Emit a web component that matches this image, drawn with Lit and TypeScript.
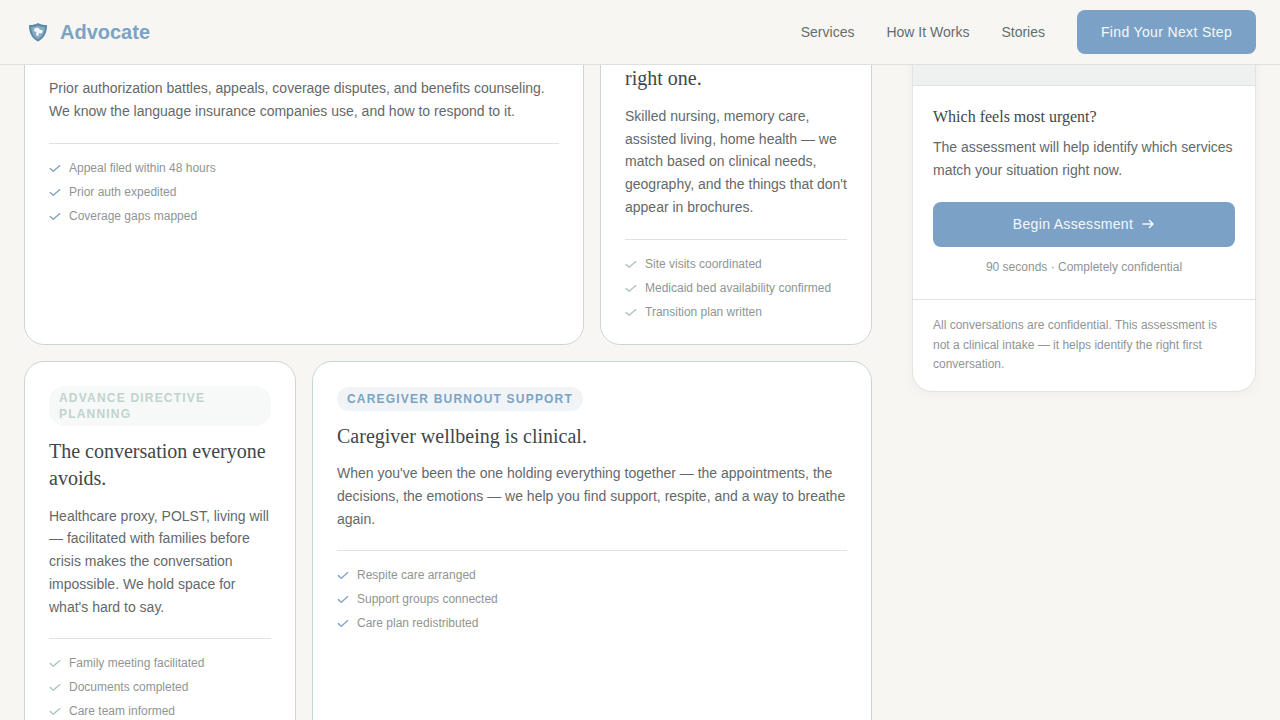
import { LitElement, html, css } from "lit";
import { customElement } from "lit/decorators.js";

const check = (cls: string) => html`<svg class="chk ${cls}" viewBox="0 0 12 12" width="12" height="12" fill="none" stroke-width="1.3" stroke-linecap="round" stroke-linejoin="round"><path d="M1.2 6.4 4.3 9.2 10.8 3.6"></path></svg>`;

@customElement("app-root")
export class AppRoot extends LitElement {
  static styles = css`
    :host { display: block; width: 1280px; height: 720px; overflow: hidden; position: relative; background: #f7f6f3; font-family: "Liberation Sans", Arial, sans-serif; color: #63696b; }
    * { box-sizing: border-box; }
    .nav { position: absolute; top: 0; left: 0; right: 0; height: 65px; z-index: 5; background: #f7f6f3; border-bottom: 1px solid #dfe1df; display: flex; align-items: center; justify-content: space-between; padding: 0 24px; }
    .brand { display: flex; align-items: center; gap: 12px; padding-left: 4px; font-size: 20px; font-weight: 700; color: #7ba3c4; }
    .links { display: flex; align-items: center; gap: 32px; font-size: 14px; color: #646e6d; }
    .cta { background: #7ba2c6; color: #f4f8fb; letter-spacing: .35px; height: 44px; width: 179px; border-radius: 8px; display: flex; align-items: center; justify-content: center; }
    .page { display: grid; grid-template-columns: 848px 344px; gap: 40px; padding: 20px 24px 0; align-items: start; }
    .grid { display: grid; grid-template-columns: repeat(3, 272px); gap: 16px; }
    .card { background: #fff; border: 1px solid #cdd6d2; border-radius: 20px; padding: 24px; }
    .wide { grid-column: span 2; }
    .b1 { padding-top: 55.9px; height: 325px; }
    .b1 hr { margin-top: 20.6px; }
    .b2 { padding-top: 43.5px; height: 325px; }
    .b2 h3 { margin-bottom: 13.4px; }
    .g h3 { margin-bottom: 12.5px; }
    .bl { border-color: #c3d9d3; min-height: 420px; padding-top: 25px; }
    .bl h3 { margin-bottom: 12px; }
    .tag { display: inline-block; font-size: 12px; line-height: 16px; font-weight: 700; letter-spacing: 1.2px; padding: 4px 10px; border-radius: 16px; text-transform: uppercase; margin-bottom: 12px; }
    .tag.sage { color: #bfd4cc; background: #f7f9f8; }
    .tag.blue { color: #7ba3c4; background: #f0f4f7; }
    h3 { margin: 0 0 13px; font: 400 20px/27px "Liberation Serif", "Times New Roman", serif; color: #41474a; }
    p { margin: 0; font-size: 14px; line-height: 22.75px; color: #63696b; }
    hr { border: 0; border-top: 1px solid #dfe2e0; margin: 20px 0 15px; }
    ul { list-style: none; margin: 0; padding: 0; display: flex; flex-direction: column; gap: 6px; }
    li { display: flex; align-items: center; gap: 8px; font-size: 12px; line-height: 18px; color: #8f9594; }
    .chk { flex: none; }
    .chk.blue { stroke: #7ba3c4; }
    .chk.sage { stroke: #a9c4ba; }
    .side { background: #fff; border: 1px solid #e2e4e2; border-radius: 20px; overflow: hidden; box-shadow: 0 2px 12px rgba(60,70,70,.05); }
    .band { height: 65px; background: #eef1f0; border-bottom: 1px solid #dfe3e2; }
    .body { padding: 20px; border-bottom: 1px solid #e2e4e2; height: 214px; }
    .q { font: 400 16px/22px "Liberation Serif", "Times New Roman", serif; color: #41474a; margin-bottom: 8px; }
    .body p { line-height: 23px; }
    .begin { width: 302px; height: 45px; margin-top: 20px; padding-bottom: 1px; background: #7ba2c6; color: #f4f8fb; border-radius: 8px; display: flex; align-items: center; justify-content: center; gap: 8px; font-size: 14px; letter-spacing: .32px; }
    .cap { text-align: center; font-size: 12px; line-height: 18px; color: #8f9594; margin-top: 11px; }
    .foot { padding: 16px 20px; font-size: 12px; line-height: 19.5px; color: #8f9594; }
  `;

  render() {
    return html`
      <header class="nav">
        <div class="brand">
          <svg width="20" height="20" viewBox="0 0 20 20">
            <path d="M10 1C13 2.6 16 3.2 19 3C19.3 10.5 16 16.5 10 19.5C4 16.5 .7 10.5 1 3C4 3.2 7 2.6 10 1Z" fill="#5d8aa8"></path>
            <path d="M10 3.6C12.4 4.7 14.6 5.1 16.8 5.1C16.8 10.5 14.4 14.8 10 17.2C5.6 14.8 3.2 10.5 3.2 5.1C5.4 5.1 7.6 4.7 10 3.6Z" fill="#86abc5"></path>
            <path d="M6 7.2C7 5.8 9.8 5.4 11 6.2L11.6 7.8 14.6 8.2C15 9.6 14 11.4 12.6 11.6L10.8 11.2 10.4 14C9.4 14.2 8.2 13.4 8 12.2L8.6 10 6.2 9.2Z" fill="#f4f7f9"></path>
          </svg>
          Advocate
        </div>
        <nav class="links">
          <span>Services</span><span>How It Works</span><span>Stories</span>
          <span class="cta">Find Your Next Step</span>
        </nav>
      </header>
      <div class="page">
        <div class="grid">
          <article class="card wide b1">
            <p>Prior authorization battles, appeals, coverage disputes, and benefits counseling. We know the language insurance companies use, and how to respond to it.</p>
            <hr />
            <ul>
              <li>${check("blue")}Appeal filed within 48 hours</li>
              <li>${check("blue")}Prior auth expedited</li>
              <li>${check("blue")}Coverage gaps mapped</li>
            </ul>
          </article>
          <article class="card b2">
            <h3>right one.</h3>
            <p>Skilled nursing, memory care, assisted living, home health — we match based on clinical needs, geography, and the things that don't appear in brochures.</p>
            <hr />
            <ul>
              <li>${check("sage")}Site visits coordinated</li>
              <li>${check("sage")}Medicaid bed availability confirmed</li>
              <li>${check("sage")}Transition plan written</li>
            </ul>
          </article>
          <article class="card g">
            <span class="tag sage">Advance Directive Planning</span>
            <h3>The conversation everyone avoids.</h3>
            <p>Healthcare proxy, POLST, living will — facilitated with families before crisis makes the conversation impossible. We hold space for what's hard to say.</p>
            <hr />
            <ul>
              <li>${check("sage")}Family meeting facilitated</li>
              <li>${check("sage")}Documents completed</li>
              <li>${check("sage")}Care team informed</li>
            </ul>
          </article>
          <article class="card wide bl">
            <span class="tag blue">Caregiver Burnout Support</span>
            <h3>Caregiver wellbeing is clinical.</h3>
            <p>When you've been the one holding everything together — the appointments, the decisions, the emotions — we help you find support, respite, and a way to breathe again.</p>
            <hr />
            <ul>
              <li>${check("blue")}Respite care arranged</li>
              <li>${check("blue")}Support groups connected</li>
              <li>${check("blue")}Care plan redistributed</li>
            </ul>
          </article>
        </div>
        <aside class="side">
          <div class="band"></div>
          <div class="body">
            <div class="q">Which feels most urgent?</div>
            <p>The assessment will help identify which services match your situation right now.</p>
            <div class="begin">Begin Assessment
              <svg width="14" height="14" viewBox="0 0 14 14" fill="none" stroke="currentColor" stroke-width="1.6" stroke-linecap="round" stroke-linejoin="round"><path d="M2 7H12M8.5 3.5 12 7 8.5 10.5"></path></svg>
            </div>
            <div class="cap">90 seconds · Completely confidential</div>
          </div>
          <div class="foot">All conversations are confidential. This assessment is not a clinical intake — it helps identify the right first conversation.</div>
        </aside>
      </div>
    `;
  }
}
